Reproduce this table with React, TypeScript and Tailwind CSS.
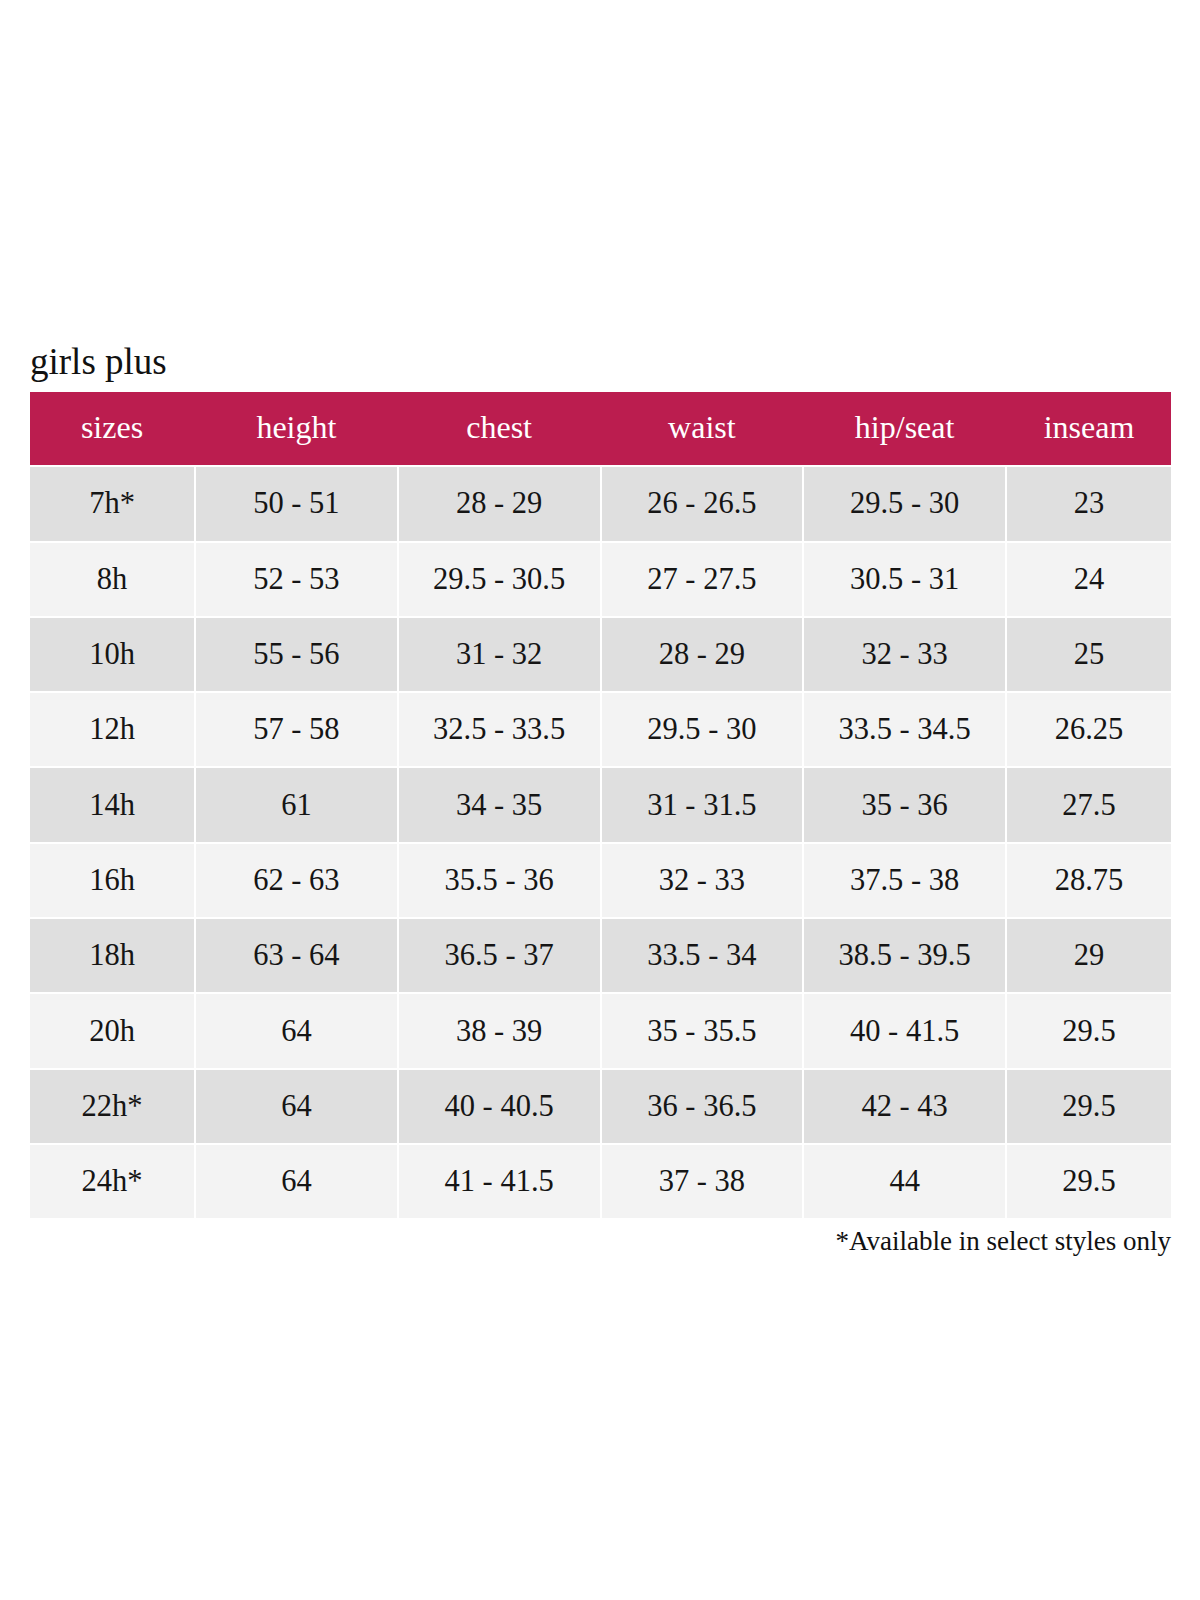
import React from "react";

const headers = ["sizes", "height", "chest", "waist", "hip/seat", "inseam"];

const rows: string[][] = [
  ["7h*", "50 - 51", "28 - 29", "26 - 26.5", "29.5 - 30", "23"],
  ["8h", "52 - 53", "29.5 - 30.5", "27 - 27.5", "30.5 - 31", "24"],
  ["10h", "55 - 56", "31 - 32", "28 - 29", "32 - 33", "25"],
  ["12h", "57 - 58", "32.5 - 33.5", "29.5 - 30", "33.5 - 34.5", "26.25"],
  ["14h", "61", "34 - 35", "31 - 31.5", "35 - 36", "27.5"],
  ["16h", "62 - 63", "35.5 - 36", "32 - 33", "37.5 - 38", "28.75"],
  ["18h", "63 - 64", "36.5 - 37", "33.5 - 34", "38.5 - 39.5", "29"],
  ["20h", "64", "38 - 39", "35 - 35.5", "40 - 41.5", "29.5"],
  ["22h*", "64", "40 - 40.5", "36 - 36.5", "42 - 43", "29.5"],
  ["24h*", "64", "41 - 41.5", "37 - 38", "44", "29.5"],
];

export default function App() {
  return (
    <div
      className="w-[1200px] h-[1600px] bg-white pt-[342px] pl-[30px]"
      style={{ fontFamily: '"Liberation Serif", "Times New Roman", serif' }}
    >
      <div className="w-[1141px] flex flex-col">
        <h1 className="text-[37px] leading-[40px] font-normal text-[#111111] mb-[10px]">
          girls plus
        </h1>
        <div className="flex flex-col gap-[2px]">
          <div className="grid grid-cols-[164px_1fr_1fr_1fr_1fr_164px] gap-x-[2px] bg-[#bb1d4f] h-[73.3px]">
            {headers.map((h) => (
              <div
                key={h}
                className="flex items-center justify-center text-white text-[32px] leading-[32px] pb-[4px]"
              >
                {h}
              </div>
            ))}
          </div>
          {rows.map((r, i) => (
            <div
              key={r[0]}
              className="grid grid-cols-[164px_1fr_1fr_1fr_1fr_164px] gap-x-[2px] h-[73.3px]"
            >
              {r.map((c, j) => (
                <div
                  key={j}
                  className={
                    "flex items-center justify-center text-[#151515] text-[30.5px] leading-[31px] " +
                    (i % 2 === 0 ? "bg-[#dfdfdf]" : "bg-[#f3f3f3]")
                  }
                >
                  {c}
                </div>
              ))}
            </div>
          ))}
        </div>
        <div className="mt-[7px] text-right text-[27px] leading-[32px] text-[#111111]">
          *Available in select styles only
        </div>
      </div>
    </div>
  );
}
